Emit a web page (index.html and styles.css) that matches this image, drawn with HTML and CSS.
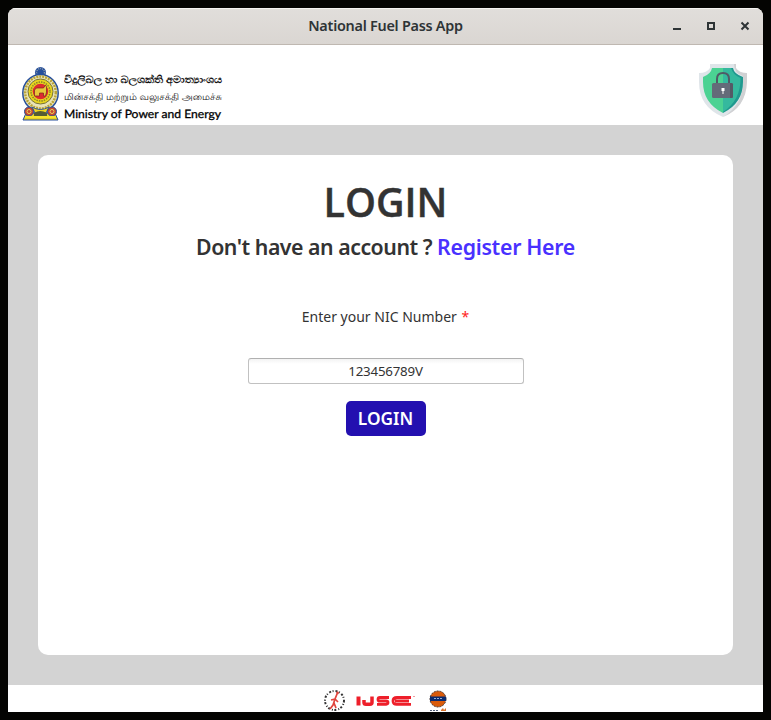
FILE: index.html
```html
<!DOCTYPE html>
<html lang="en">
<head>
<meta charset="utf-8">
<title>National Fuel Pass App</title>
<link rel="stylesheet" href="styles.css">
</head>
<body>
<div class="window">
  <header class="titlebar">
    <h1 class="title">National Fuel Pass App</h1>
    <svg class="controls" viewBox="0 0 86 16" aria-hidden="true">
      <path d="M1 11h8" stroke-width="2"/>
      <rect x="36" y="5" width="6" height="6" stroke-width="2"/>
      <path d="M69.5 4.5l7 7m0-7l-7 7" stroke-width="2"/>
    </svg>
  </header>
  <div class="banner">
    <div class="ministry">
      <svg class="emblem" viewBox="0 0 37 54" aria-hidden="true">
        <path d="M4 46L33 46L36 53H1Z" fill="#e6d023" stroke="#264f9b"/>
        <circle cx="18.500" cy="5.500" r="5.500" fill="#264f9b"/>
        <circle cx="18.500" cy="5.500" r="4" fill="none" stroke="#8b9aab" stroke-width="1.500" stroke-dasharray="1 1"/>
        <ellipse cx="18.500" cy="26" rx="17.700" ry="18.500" fill="#e8e3b9" stroke="#264f9b" stroke-width="1.500"/>
        <ellipse cx="18.500" cy="25.500" rx="15.300" ry="16" fill="none" stroke="#b9a336" stroke-width="2.500" stroke-dasharray="2 1"/>
        <circle cx="18.500" cy="24.500" r="12.500" fill="#e8d51e" stroke="#777239"/>
        <circle cx="18.500" cy="24.500" r="9.500" fill="none" stroke="#8a812d" stroke-width="1.500" stroke-dasharray="1.500 1"/>
        <circle cx="18.500" cy="24.500" r="7.800" fill="#dd2b2f"/>
        <path d="M12.500 29v-6l2-2h7l2-3 1 2v5l-1 4h-2v-3h-4v3z" fill="#e8c83a" stroke="#79251e" stroke-width=".7"/>
        <path d="M10 40q8 5 17 0l-3 6H13z" fill="#f0d61b" stroke="#315598"/>
        <path d="M12 46q6-4 13 0v3H12z" fill="#555d32"/>
        <circle cx="7" cy="44.500" r="4.500" fill="#c6472d" stroke="#264f9b"/>
        <circle cx="30" cy="44.500" r="4.500" fill="#c6472d" stroke="#264f9b"/>
        <circle cx="7" cy="44.500" r="2" fill="none" stroke="#ead25a"/>
        <circle cx="30" cy="44.500" r="2" fill="none" stroke="#ead25a"/>
        <path d="M3 50h31" stroke="#f7e52c" stroke-width="2"/>
      </svg>
      <svg class="ministry-name" viewBox="0 0 160 54" role="img">
        <text class="sinhala" x="0" y="16" textLength="158" lengthAdjust="spacingAndGlyphs">විදුලිබල හා බලශක්ති අමාත්‍යාංශය</text>
        <text class="tamil" x="0" y="33" textLength="158" lengthAdjust="spacingAndGlyphs">மின்சக்தி மற்றும் வலுசக்தி அமைச்சு</text>
        <text class="english" x="0" y="51" textLength="157" lengthAdjust="spacingAndGlyphs">Ministry of Power and Energy</text>
      </svg>
    </div>
    <svg class="shield" viewBox="0 0 49 54" aria-hidden="true">
      <path d="M11 0H36V4Q38 9 47 9V18Q47 43 24 53Q0 43 0 18V9Q8 9 11 4Z" fill="#dfe5e9"/>
      <path d="M35 0H37V4Q40 9 48 9V18Q47 44 24 53Q44 41 44 18V12Q35 9 35 0Z" fill="#d0d1d3"/>
      <path d="M13 4H24V49Q4 39 4 18V13Q12 10 13 4Z" fill="#4bd293"/>
      <path d="M24 4H34Q35 10 44 13V18Q44 39 24 49Z" fill="#20998f"/>
      <path d="M24 4H32Q34 11 41.500 14Q42 36 24 48Z" fill="#35b99e"/>
      <path d="M18 20v-5q0-6 6-6t6 6v5" fill="none" stroke="#4f5b67" stroke-width="2"/>
      <rect x="13" y="19" width="21" height="15" rx="1.500" fill="#646b79"/>
      <path d="M31 19h1.500q1.500 0 1.500 1.500v12q0 1.500-1.500 1.500H31z" fill="#555966"/>
      <path d="M22.500 24h3v3h-1v3h-1v-3h-1z" fill="#fff"/>
    </svg>
  </div>
  <main class="content">
    <form class="card">
      <h2 class="heading">LOGIN</h2>
      <p class="prompt">Don't have an account ? <a class="register">Register Here</a></p>
      <label class="label" for="nic">Enter your NIC Number <span class="required">*</span></label>
      <input class="field" id="nic" type="text" value="123456789V">
      <button class="submit" type="button">LOGIN</button>
    </form>
  </main>
  <footer class="footer">
    <svg class="partners" viewBox="0 0 124 24" aria-hidden="true">
      <circle cx="11.500" cy="11.500" r="9.500" fill="none" stroke="#333" stroke-width="2" stroke-dasharray="2 1.500 1 2"/>
      <path d="M14 5l-2 5-4 1m4-1l3 3m-3-3l-2 6-3 4m4-6l2 5" fill="none" stroke="#e0453e" stroke-width="1.700"/>
      <circle cx="14.500" cy="4" r="1.400" fill="#e0453e"/>
      <g fill="none" stroke="#ee1f2a" stroke-width="2.800">
        <path d="M35.500 7.500v9" stroke-width="4"/>
        <path d="M41 11v2.500q0 1.800 2 1.800h4q2 0 2-2V7.500" stroke-width="3.500"/>
        <path d="M66 8.500H57q-2 0-2 2t2 1.500h6q2 0 2 1.500t-2 1.800h-9"/>
        <path d="M88 8.500H74q-4 0-4 3.500t4 3.300h14M72 12h14"/>
      </g>
      <path d="M90 7.500h2" stroke="#f29b9f"/>
      <circle cx="115" cy="10" r="8" fill="#d95b0b" stroke="#443734" stroke-dasharray="2 1"/>
      <path d="M107 7.500h16v4.500h-16z" fill="#092b70"/>
      <path d="M111 9.500h8" stroke="#9aafd2" stroke-dasharray="2 1"/>
      <path d="M107 21.500h8" stroke="#536078" stroke-dasharray="2 1"/>
      <path d="M118 21l2-2 1 2 2-2v3h-5z" fill="#da742c"/>
    </svg>
  </footer>
</div>
</body>
</html>
```
FILE: styles.css
```css
* { box-sizing: border-box; }
body {
  height: 720px;
  margin: 0;
  padding: 8px;
  overflow: hidden;
  background: #040402;
  color: #333;
  font-family: "Noto Sans", sans-serif;
}
.window {
  display: flex;
  flex-direction: column;
  height: 704px;
  overflow: hidden;
  border-radius: 8px 8px 0 0;
  background: #fff;
}
.titlebar {
  display: grid;
  grid-template-columns: 1fr auto 1fr;
  align-items: center;
  flex: 0 0 37px;
  border-bottom: 1px solid #bfb8b1;
  background: linear-gradient(#e1dedb, #dad6d2);
  box-shadow: inset 0 1px #f4f2f1;
}
.title {
  grid-column: 2;
  margin: 0;
  color: #2e3436;
  font-size: 14.4px;
  font-weight: 600;
  letter-spacing: -0.25px;
  line-height: 20px;
  text-align: center;
  white-space: nowrap;
}
.controls {
  width: 86px;
  height: 16px;
  margin-right: 5px;
  justify-self: end;
  fill: none;
  stroke: #2e3436;
}
.banner {
  display: flex;
  justify-content: space-between;
  flex: 0 0 80px;
  padding: 19px 15px 0 14px;
}
.ministry { display: flex; gap: 5px; padding-top: 3px; }
.emblem { width: 37px; height: 54px; }
.ministry-name { width: 160px; height: 54px; fill: #111; text-rendering: geometricPrecision; }
.sinhala { font-size: 10px; font-weight: 700; }
.tamil { font-size: 9px; font-weight: 500; }
.english { font-family: Lato, sans-serif; font-size: 11.5px; font-weight: 400; fill: #000; stroke: #000; stroke-width: 0.3px; }
.shield { width: 49px; height: 54px; }
.content { flex: 0 0 560px; padding: 30px; background: #d3d3d3; }
.card {
  display: flex;
  flex-direction: column;
  align-items: center;
  height: 500px;
  padding-top: 20px;
  border-radius: 10px;
  background: #fff;
}
.heading { margin: 0; font-family: "Open Sans", sans-serif; font-size: 39.4px; font-weight: 600; line-height: 54px; -webkit-text-stroke: 0.4px #333; }
.prompt { margin: 3px 0 0; font-size: 21.3px; font-weight: 600; letter-spacing: -0.48px; line-height: 30px; white-space: nowrap; }
.register { color: #4931ff; letter-spacing: -0.3px; }
.label { margin-top: 45px; font-size: 14px; line-height: 20px; }
.required { margin-left: 1px; color: #f22; }
.field {
  width: 276px;
  height: 26px;
  margin-top: 31px;
  padding: 0;
  border: 1px solid #c1c1c1;
  border-top-color: #b0b0b0;
  border-radius: 3px;
  background: linear-gradient(#f3f3f3, #fff 5px);
  color: #333;
  font: 13.3px/24px "Noto Sans", sans-serif;
  letter-spacing: -0.2px;
  text-align: center;
}
.submit {
  width: 80px;
  height: 35px;
  margin-top: 17px;
  padding: 0;
  border: 0;
  border-radius: 5px;
  background: #2310b0;
  color: #fff;
  font: 600 17.3px/35px "Noto Sans", sans-serif;
}
.footer { display: flex; justify-content: center; flex: 0 0 27px; padding: 4px 2px 0 0; }
.partners { width: 124px; height: 24px; }
```
